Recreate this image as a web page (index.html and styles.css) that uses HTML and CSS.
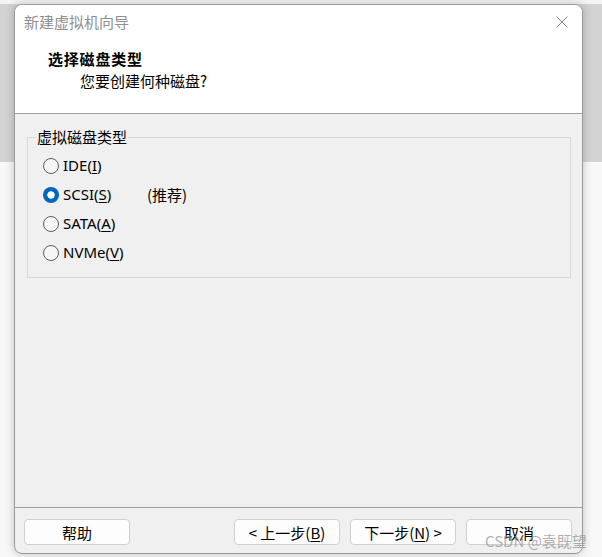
FILE: index.html
```html
<!DOCTYPE html>
<html lang="zh-CN">
<head>
<meta charset="utf-8">
<title>新建虚拟机向导</title>
<link rel="stylesheet" href="styles.css">
</head>
<body>
<div class="window">
  <div class="header">
    <div class="titlebar">
      <span class="title">新建虚拟机向导</span>
      <svg class="close" width="12" height="12" viewBox="0 0 12 12"><path d="M0.5 0.5 L11.5 11.5 M11.5 0.5 L0.5 11.5" stroke="#8a8a8a" stroke-width="1" fill="none"/></svg>
    </div>
    <div class="heading">选择磁盘类型</div>
    <div class="subheading">您要创建何种磁盘?</div>
  </div>
  <div class="body">
    <fieldset class="group">
      <legend class="legend">虚拟磁盘类型</legend>
      <div class="row"><span class="radio"></span><span class="label">IDE(<u>I</u>)</span></div>
      <div class="row"><span class="radio checked"></span><span class="label">SCSI(<u>S</u>)</span><span class="note">(推荐)</span></div>
      <div class="row"><span class="radio"></span><span class="label">SATA(<u>A</u>)</span></div>
      <div class="row"><span class="radio"></span><span class="label">NVMe(<u>V</u>)</span></div>
    </fieldset>
  </div>
  <div class="footer">
    <div class="btn">帮助</div>
    <div class="spacer"></div>
    <div class="btn">&lt; 上一步(<u>B</u>)</div>
    <div class="btn">下一步(<u>N</u>) &gt;</div>
    <div class="btn">取消</div>
  </div>
</div>
<div class="watermark">CSDN @袁既望</div>
</body>
</html>
```
FILE: styles.css
```css
html, body {
  margin: 0;
  padding: 0;
}
body {
  width: 602px;
  height: 557px;
  overflow: hidden;
  position: relative;
  background: linear-gradient(to bottom, #f4f4f4 0, #f4f4f4 4px, #d3d3d3 4px, #d3d3d3 162px, #f8f8f8 162px, #f8f8f8 100%);
  font-family: "Segoe UI", "Noto Sans", "Noto Sans CJK SC", sans-serif;
  font-size: 15px;
  color: #000;
}
.window {
  box-sizing: border-box;
  margin: 4px 0 0 14px;
  width: 569px;
  height: 550px;
  border: 1px solid #9a9a9a;
  border-radius: 8px;
  background: #f0f0f0;
  overflow: hidden;
  display: flex;
  flex-direction: column;
  box-shadow: 0 0 10px rgba(0, 0, 0, 0.22);
}
.header {
  box-sizing: border-box;
  height: 109px;
  background: #fff;
  border-bottom: 1px solid #a0a0a0;
  flex: none;
}
.titlebar {
  height: 34px;
  display: flex;
  align-items: center;
  justify-content: space-between;
  padding: 0 14px 0 9px;
}
.title {
  color: #8f8f8f;
  font-family: "Noto Sans CJK SC", sans-serif;
  font-size: 15px;
  line-height: 34px;
}
.close {
  display: block;
}
.heading {
  margin-top: 10px;
  padding-left: 33px;
  line-height: 20px;
  font-weight: bold;
  font-family: "Noto Sans CJK SC", sans-serif;
  font-size: 15px;
  letter-spacing: 0.8px;
}
.subheading {
  margin-top: 2px;
  padding-left: 65px;
  line-height: 20px;
  font-family: "Noto Sans CJK SC", sans-serif;
  font-size: 15px;
}
.body {
  flex: 1;
  padding: 13px 11px 0 12px;
}
.group {
  margin: 0;
  padding: 4px 8px 10px 8px;
  border: 1px solid #d9d9d9;
  min-width: 0;
}
.legend {
  padding: 0 1px;
  line-height: 20px;
  font-family: "Noto Sans CJK SC", sans-serif;
}
.row {
  height: 29px;
  display: flex;
  align-items: center;
  margin-left: 7px;
}
.radio {
  box-sizing: border-box;
  width: 16px;
  height: 16px;
  border-radius: 50%;
  border: 1px solid #5e5e5e;
  background: #f6f6f6;
  flex: none;
  margin-right: 4px;
}
.radio.checked {
  border: none;
  background: radial-gradient(circle, #fff 0, #fff 3.4px, #0067c0 4px);
}
.label {
  width: 84px;
  line-height: 20px;
  margin-top: -1px;
}
.note {
  line-height: 20px;
  font-family: "Noto Sans CJK SC", sans-serif;
}
u {
  text-underline-offset: 2px;
}
.footer {
  flex: none;
  height: 46px;
  box-sizing: border-box;
  border-top: 1px solid #a0a0a0;
  padding: 11px 10px 0 9px;
  display: flex;
  gap: 10px;
}
.spacer {
  flex: 1;
}
.btn {
  box-sizing: border-box;
  width: 106px;
  height: 26px;
  border: 1px solid #d0d0d0;
  border-radius: 4px;
  background: #fdfdfd;
  display: flex;
  align-items: center;
  justify-content: center;
  font-family: "Noto Sans CJK SC", sans-serif;
  font-size: 15px;
}
.watermark {
  position: absolute;
  left: 485px;
  top: 531px;
  line-height: 20px;
  font-size: 15px;
  font-family: "Noto Sans CJK SC", sans-serif;
  color: rgba(150, 150, 150, 0.75);
  white-space: nowrap;
}
```
